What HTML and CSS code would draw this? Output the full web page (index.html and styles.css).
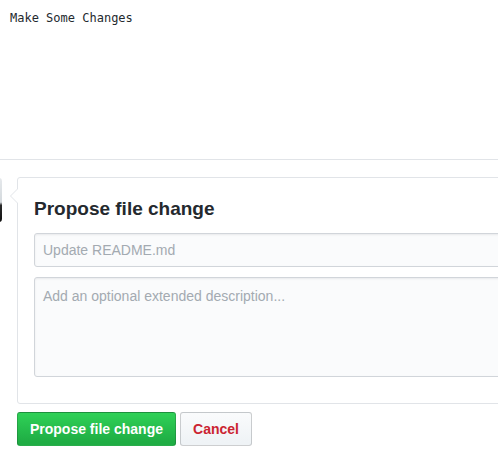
FILE: index.html
```html
<!DOCTYPE html>
<html>
<head>
<meta charset="utf-8">
<link rel="stylesheet" href="styles.css">
</head>
<body>
<div class="preview">
  <pre class="code">Make Some Changes</pre>
</div>
<div class="commit">
  <div class="avatar"></div>
  <div class="box">
    <h3 class="title">Propose file change</h3>
    <input class="field" type="text" placeholder="Update README.md">
    <textarea class="field area" placeholder="Add an optional extended description..."></textarea>
  </div>
  <div class="actions">
    <button class="btn btn-primary">Propose file change</button>
    <button class="btn btn-cancel">Cancel</button>
  </div>
</div>
</body>
</html>
```

FILE: styles.css
```css
html, body {
  margin: 0;
  padding: 0;
  background: #fff;
  overflow: hidden;
}
body {
  font-family: "Liberation Sans", Arial, sans-serif;
  color: #24292e;
  width: 498px;
  height: 471px;
}
.preview {
  box-sizing: border-box;
  height: 160px;
  border-bottom: 1px solid #e1e4e8;
}
.code {
  margin: 0;
  padding: 10px 10px;
  font-family: "DejaVu Sans Mono", "Liberation Mono", monospace;
  font-size: 12px;
  line-height: 16px;
  color: #24292e;
}
.commit {
  position: relative;
  padding: 17px 0 0 17px;
  margin-right: -42px;
}
.avatar {
  position: absolute;
  left: -42px;
  top: 18px;
  width: 44px;
  height: 44px;
  border-radius: 3px;
  background: linear-gradient(to bottom, #e6e9ec 0%, #d4d9dd 55%, #2a2a2a 62%, #111 100%);
}
.box {
  position: relative;
  border: 1px solid #e1e4e8;
  border-radius: 3px;
  padding: 16px 16px 26px 16px;
  background: #fff;
}
.box::before,
.box::after {
  content: "";
  position: absolute;
  top: 10px;
  width: 0;
  height: 0;
  border-style: solid;
  border-color: transparent;
}
.box::before {
  left: -8px;
  border-width: 8px 8px 8px 0;
  border-right-color: #e1e4e8;
}
.box::after {
  left: -7px;
  border-width: 8px 8px 8px 0;
  border-right-color: #fff;
}
.title {
  margin: 0 0 9px 0;
  font-size: 19px;
  line-height: 30px;
  font-weight: bold;
  color: #24292e;
}
.field {
  display: block;
  box-sizing: border-box;
  width: 100%;
  height: 34px;
  margin: 0 0 10px 0;
  padding: 6px 8px;
  font-family: "Liberation Sans", Arial, sans-serif;
  font-size: 14px;
  line-height: 20px;
  color: #24292e;
  background: #fafbfc;
  border: 1px solid #d1d5da;
  border-radius: 3px;
  box-shadow: inset 0 1px 2px rgba(27, 31, 35, 0.075);
  outline: none;
}
.field::placeholder {
  color: #a3aab1;
}
.area {
  height: 100px;
  margin: 0;
  resize: none;
  padding: 8px 8px;
}
.actions {
  display: flex;
  gap: 4px;
  margin-top: 8px;
}
.btn {
  box-sizing: border-box;
  height: 34px;
  padding: 6px 10px;
  font-family: "Liberation Sans", Arial, sans-serif;
  font-size: 14px;
  font-weight: bold;
  line-height: 20px;
  border: 1px solid rgba(27, 31, 35, 0.2);
  border-radius: 3px;
  cursor: pointer;
}
.btn-primary {
  width: 159px;
  color: #fff;
  background-image: linear-gradient(-180deg, #2fd157 0%, #1fad44 90%);
}
.btn-cancel {
  width: 72px;
  color: #cb2431;
  background-image: linear-gradient(-180deg, #fafbfc 0%, #eff3f6 90%);
}
```
